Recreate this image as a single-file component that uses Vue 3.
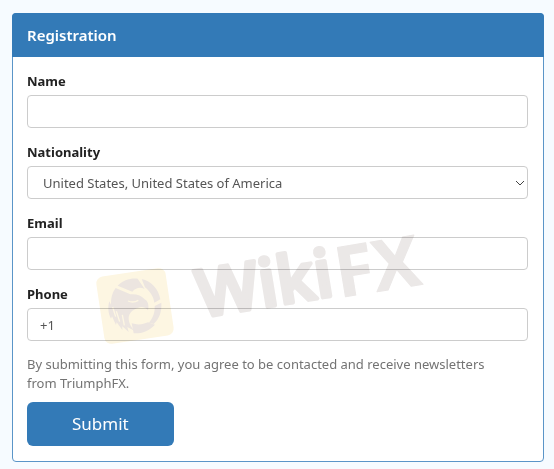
<script setup>
import { reactive } from 'vue'

const form = reactive({ name: '', nationality: 'US', email: '', phone: '+1' })
</script>

<template>
  <main class="page">
    <section class="panel">
      <h1 class="panel-heading">Registration</h1>
      <form class="panel-body" @submit.prevent>
        <div class="field">
          <label for="name">Name</label>
          <input id="name" v-model="form.name" class="control" type="text" />
        </div>
        <div class="field">
          <label for="nationality">Nationality</label>
          <div class="select-wrap">
            <select id="nationality" v-model="form.nationality" class="control">
              <option value="US">United States, United States of America</option>
            </select>
            <svg class="chevron" viewBox="0 0 10 6" aria-hidden="true">
              <path d="M1 1l4 4 4-4" />
            </svg>
          </div>
        </div>
        <div class="field">
          <label for="email">Email</label>
          <input id="email" v-model="form.email" class="control" type="email" />
        </div>
        <div class="field">
          <label for="phone">Phone</label>
          <input id="phone" v-model="form.phone" class="control" type="tel" />
        </div>
        <p class="note">By submitting this form, you agree to be contacted and receive newsletters from TriumphFX.</p>
        <button class="submit" type="submit">Submit</button>
      </form>

      <svg class="watermark" viewBox="0 0 380 170">
        <rect class="tile" x="-35" y="-34" width="70" height="68" rx="7" transform="translate(45 103) rotate(-8.5)" />
        <g class="bird" transform="translate(-11 47) scale(0.3333)">
          <path d="M116 107C132 91 153 84 176 86L197 117C184 111 172 112 160 125Z" />
          <path d="M188 87C216 93 239 116 244 148L226 158C223 136 210 122 198 112Z" />
          <path d="M227 168L247 158C249 185 240 207 224 222L210 218C222 203 228 188 227 168Z" />
          <path d="M158 220C178 226 193 223 207 217L228 224C211 242 190 251 164 250Z" />
          <path d="M110 114L154 133C172 131 188 137 197 148C206 153 211 164 207 181C200 172 189 169 178 173C161 178 149 190 149 205C149 219 157 232 166 242L145 231L149 246L130 229L130 240L113 217L111 225L99 199L96 206C87 190 86 171 91 154L96 164C95 144 100 127 110 114Z" />
          <path class="cut" d="M147 153C158 158 168 157 178 151M101 171L110 200M112 184L122 215M130 195L136 226" />
        </g>
        <g transform="translate(114 117) rotate(-9.3)" class="wordmark">
          <text class="round" x="-3" y="-3">Wiki</text>
          <text class="square" x="137" y="0">FX</text>
        </g>
      </svg>
    </section>
  </main>
</template>

<style>
body {
  margin: 0;
  background: #f6fbff;
}
</style>

<style scoped>
.page {
  padding: 13px 10px 8px 12px;
  font-family: "Noto Sans", "Open Sans", sans-serif;
  font-size: 13px;
  line-height: 20px;
  color: #222;
}

.panel {
  position: relative;
  box-sizing: border-box;
  border: 1px solid #5a95c8;
  border-radius: 4px;
  background: #fff;
}

.panel-heading {
  margin: -1px -1px 0;
  padding: 12px 15px;
  border-radius: 4px 4px 0 0;
  background: #337ab7;
  color: #fff;
  font-size: 15px;
  font-weight: 600;
  line-height: 20px;
}

.panel-body {
  padding: 14px 15px 15px 14px;
}

.field {
  margin-bottom: 14px;
}

.field label {
  display: block;
  margin-bottom: 4px;
  font-weight: 700;
}

.control {
  display: block;
  box-sizing: border-box;
  width: 100%;
  height: 33px;
  margin: 0;
  padding: 0 12px;
  border: 1px solid #ccc;
  border-radius: 4px;
  background: #fff;
  color: #555;
  font: inherit;
  appearance: none;
}

.select-wrap {
  display: grid;
  align-items: center;
}

.select-wrap > * {
  grid-area: 1 / 1;
}

.select-wrap .control {
  padding: 0 24px 0 15px;
}

.chevron {
  justify-self: end;
  width: 10px;
  height: 6px;
  margin-right: 3px;
  fill: none;
  stroke: #444;
  stroke-width: 1;
  pointer-events: none;
}

.note {
  margin: 0 0 9px;
  padding-right: 24px;
  color: #737373;
  line-height: 19px;
}

.submit {
  display: block;
  height: 44px;
  padding: 0 45px;
  border: 0;
  border-radius: 6px;
  background: #337ab7;
  color: #fff;
  font: inherit;
  font-size: 17px;
}

.watermark {
  position: absolute;
  top: 189px;
  left: 77px;
  width: 380px;
  height: 170px;
  mix-blend-mode: multiply;
  pointer-events: none;
}

.tile {
  fill: #fdf6e2;
}

.bird {
  fill: #ece5e0;
}

.cut {
  fill: none;
  stroke: #fdf6e2;
  stroke-width: 4;
}

.wordmark {
  fill: #ebe8e7;
  stroke: #ebe8e7;
  stroke-linejoin: round;
  font-family: "Open Sans", sans-serif;
  font-weight: 700;
}

.round {
  font-size: 66px;
  font-weight: 600;
  stroke-width: 4px;
}

.square {
  font-size: 70px;
  stroke-width: 1px;
}
</style>
